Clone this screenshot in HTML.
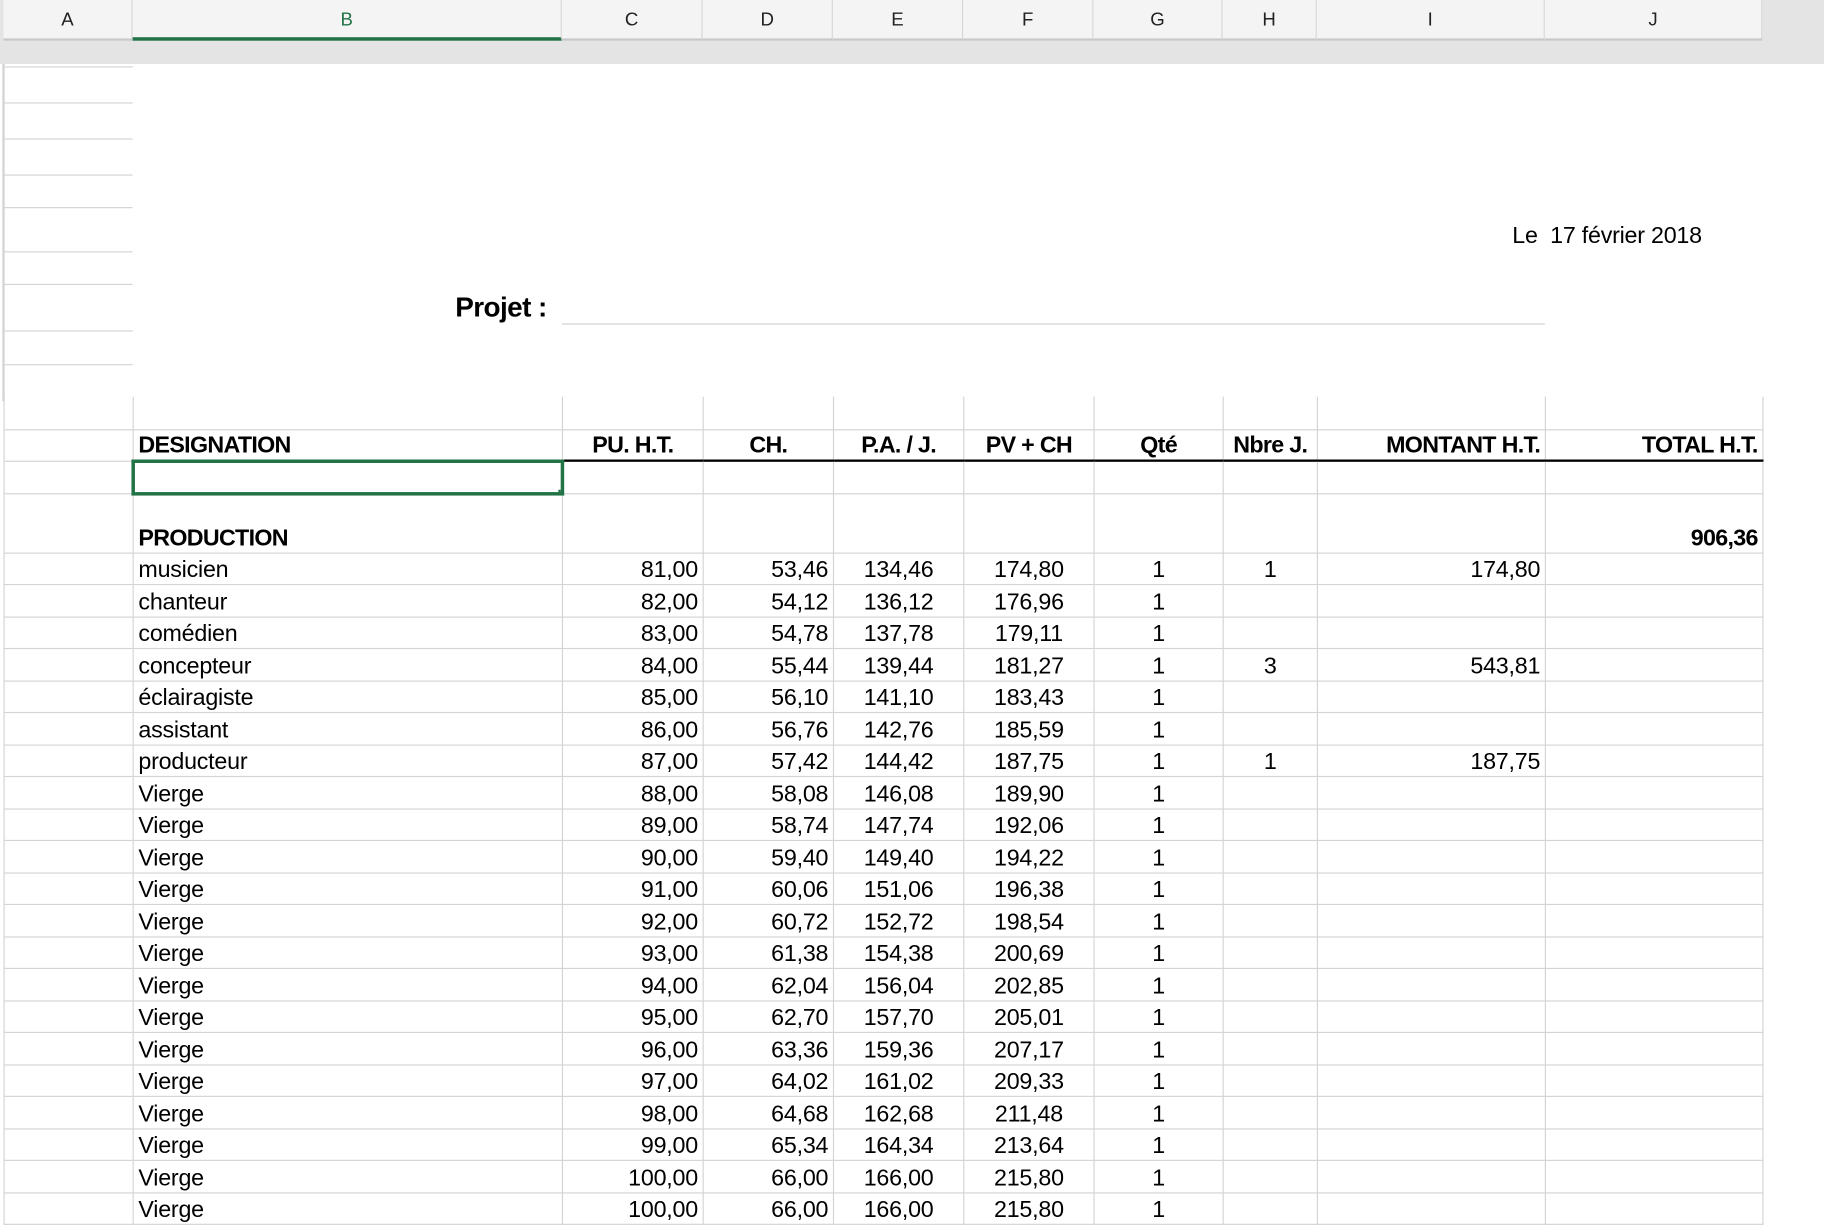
<!DOCTYPE html>
<html><head><meta charset="utf-8">
<style>
html,body{margin:0;padding:0;background:#fff;overflow:hidden;width:1824px;height:1220px}
#w{position:absolute;left:0;top:0;width:1568px;height:1049px;transform:scale(1.16327);transform-origin:0 0;font-family:"Liberation Sans",Arial,sans-serif;color:#000}
.hdr{position:absolute;top:0;height:35px;background:#f4f4f4;border-right:1px solid #d6d6d6;border-bottom:2px solid #c8c8c8;box-sizing:border-box;text-align:center;font-size:16px;line-height:35px;color:#222}
.band{position:absolute;left:0;top:0;width:1568px;height:55px;background:#e4e4e4}
.al{position:absolute;left:3px;width:111px;height:1px;background:#d4d4d4}
table{position:absolute;left:3px;top:341px;border-collapse:collapse;table-layout:fixed;font-size:20px;letter-spacing:-0.2px}
td{border:1px solid #d4d4d4;padding:0 4px 2px 4px;vertical-align:bottom;white-space:nowrap;overflow:hidden;line-height:20px}
tr.d{height:27.5px}
.r{text-align:right}.c{text-align:center}.b td{font-weight:bold;letter-spacing:-0.6px}
</style></head><body><div id="w">
<div class="band"></div>
<div class="hdr" style="left:3px;width:111px">A</div>
<div class="hdr" style="left:114px;width:369px;color:#217346;border-bottom:3px solid #217346">B</div>
<div class="hdr" style="left:483px;width:121px">C</div>
<div class="hdr" style="left:604px;width:112px">D</div>
<div class="hdr" style="left:716px;width:112px">E</div>
<div class="hdr" style="left:828px;width:112px">F</div>
<div class="hdr" style="left:940px;width:111px">G</div>
<div class="hdr" style="left:1051px;width:81px">H</div>
<div class="hdr" style="left:1132px;width:196px">I</div>
<div class="hdr" style="left:1328px;width:187px">J</div>
<div style="position:absolute;left:2px;top:55px;width:2px;height:290px;background:#d4d4d4"></div>
<div class="al" style="top:57px"></div><div class="al" style="top:88px"></div><div class="al" style="top:119px"></div><div class="al" style="top:150px"></div><div class="al" style="top:178px"></div><div class="al" style="top:216px"></div><div class="al" style="top:244px"></div><div class="al" style="top:284px"></div><div class="al" style="top:313px"></div>
<div style="position:absolute;left:1300px;top:192px;font-size:20px;letter-spacing:-0.2px">Le&nbsp; 17 février 2018</div>
<div style="position:absolute;left:300px;width:170px;text-align:right;top:251px;font-size:24px;font-weight:bold;letter-spacing:-0.5px">Projet :</div>
<div style="position:absolute;left:483px;top:278px;width:845px;height:1px;background:#d0d0d0"></div>
<table>
<colgroup><col style="width:111px"><col style="width:369px"><col style="width:121px"><col style="width:112px"><col style="width:112px"><col style="width:112px"><col style="width:111px"><col style="width:81px"><col style="width:196px"><col style="width:187px"></colgroup>
<tr style="height:28px"><td style="border-top:none"></td><td style="border-top:none"></td><td style="border-top:none"></td><td style="border-top:none"></td><td style="border-top:none"></td><td style="border-top:none"></td><td style="border-top:none"></td><td style="border-top:none"></td><td style="border-top:none"></td><td style="border-top:none"></td></tr>
<tr style="height:27px" class="b"><td></td><td>DESIGNATION</td><td class="c" style="border-bottom:2px solid #000">PU. H.T.</td><td class="c" style="border-bottom:2px solid #000">CH.</td><td class="c" style="border-bottom:2px solid #000">P.A. / J.</td><td class="c" style="border-bottom:2px solid #000">PV + CH</td><td class="c" style="border-bottom:2px solid #000">Qté</td><td class="c" style="border-bottom:2px solid #000">Nbre J.</td><td class="r" style="border-bottom:2px solid #000">MONTANT H.T.</td><td class="r" style="border-bottom:2px solid #000">TOTAL H.T.</td></tr>
<tr style="height:28px"><td></td><td style="border:3px solid #217346;position:relative"><div style="position:absolute;right:-6px;bottom:-6px;width:8px;height:8px;background:#217346"></div></td><td></td><td></td><td></td><td></td><td></td><td></td><td></td><td></td></tr>
<tr style="height:51px" class="b"><td></td><td>PRODUCTION</td><td></td><td></td><td></td><td></td><td></td><td></td><td></td><td class="r">906,36</td></tr>
<tr class="d"><td></td><td>musicien</td><td class="r">81,00</td><td class="r">53,46</td><td class="c">134,46</td><td class="c">174,80</td><td class="c">1</td><td class="c">1</td><td class="r">174,80</td><td></td></tr>
<tr class="d"><td></td><td>chanteur</td><td class="r">82,00</td><td class="r">54,12</td><td class="c">136,12</td><td class="c">176,96</td><td class="c">1</td><td></td><td></td><td></td></tr>
<tr class="d"><td></td><td>comédien</td><td class="r">83,00</td><td class="r">54,78</td><td class="c">137,78</td><td class="c">179,11</td><td class="c">1</td><td></td><td></td><td></td></tr>
<tr class="d"><td></td><td>concepteur</td><td class="r">84,00</td><td class="r">55,44</td><td class="c">139,44</td><td class="c">181,27</td><td class="c">1</td><td class="c">3</td><td class="r">543,81</td><td></td></tr>
<tr class="d"><td></td><td>éclairagiste</td><td class="r">85,00</td><td class="r">56,10</td><td class="c">141,10</td><td class="c">183,43</td><td class="c">1</td><td></td><td></td><td></td></tr>
<tr class="d"><td></td><td>assistant</td><td class="r">86,00</td><td class="r">56,76</td><td class="c">142,76</td><td class="c">185,59</td><td class="c">1</td><td></td><td></td><td></td></tr>
<tr class="d"><td></td><td>producteur</td><td class="r">87,00</td><td class="r">57,42</td><td class="c">144,42</td><td class="c">187,75</td><td class="c">1</td><td class="c">1</td><td class="r">187,75</td><td></td></tr>
<tr class="d"><td></td><td>Vierge</td><td class="r">88,00</td><td class="r">58,08</td><td class="c">146,08</td><td class="c">189,90</td><td class="c">1</td><td></td><td></td><td></td></tr>
<tr class="d"><td></td><td>Vierge</td><td class="r">89,00</td><td class="r">58,74</td><td class="c">147,74</td><td class="c">192,06</td><td class="c">1</td><td></td><td></td><td></td></tr>
<tr class="d"><td></td><td>Vierge</td><td class="r">90,00</td><td class="r">59,40</td><td class="c">149,40</td><td class="c">194,22</td><td class="c">1</td><td></td><td></td><td></td></tr>
<tr class="d"><td></td><td>Vierge</td><td class="r">91,00</td><td class="r">60,06</td><td class="c">151,06</td><td class="c">196,38</td><td class="c">1</td><td></td><td></td><td></td></tr>
<tr class="d"><td></td><td>Vierge</td><td class="r">92,00</td><td class="r">60,72</td><td class="c">152,72</td><td class="c">198,54</td><td class="c">1</td><td></td><td></td><td></td></tr>
<tr class="d"><td></td><td>Vierge</td><td class="r">93,00</td><td class="r">61,38</td><td class="c">154,38</td><td class="c">200,69</td><td class="c">1</td><td></td><td></td><td></td></tr>
<tr class="d"><td></td><td>Vierge</td><td class="r">94,00</td><td class="r">62,04</td><td class="c">156,04</td><td class="c">202,85</td><td class="c">1</td><td></td><td></td><td></td></tr>
<tr class="d"><td></td><td>Vierge</td><td class="r">95,00</td><td class="r">62,70</td><td class="c">157,70</td><td class="c">205,01</td><td class="c">1</td><td></td><td></td><td></td></tr>
<tr class="d"><td></td><td>Vierge</td><td class="r">96,00</td><td class="r">63,36</td><td class="c">159,36</td><td class="c">207,17</td><td class="c">1</td><td></td><td></td><td></td></tr>
<tr class="d"><td></td><td>Vierge</td><td class="r">97,00</td><td class="r">64,02</td><td class="c">161,02</td><td class="c">209,33</td><td class="c">1</td><td></td><td></td><td></td></tr>
<tr class="d"><td></td><td>Vierge</td><td class="r">98,00</td><td class="r">64,68</td><td class="c">162,68</td><td class="c">211,48</td><td class="c">1</td><td></td><td></td><td></td></tr>
<tr class="d"><td></td><td>Vierge</td><td class="r">99,00</td><td class="r">65,34</td><td class="c">164,34</td><td class="c">213,64</td><td class="c">1</td><td></td><td></td><td></td></tr>
<tr class="d"><td></td><td>Vierge</td><td class="r">100,00</td><td class="r">66,00</td><td class="c">166,00</td><td class="c">215,80</td><td class="c">1</td><td></td><td></td><td></td></tr>
<tr class="d"><td></td><td>Vierge</td><td class="r">100,00</td><td class="r">66,00</td><td class="c">166,00</td><td class="c">215,80</td><td class="c">1</td><td></td><td></td><td></td></tr>
</table>
</div></body></html>
